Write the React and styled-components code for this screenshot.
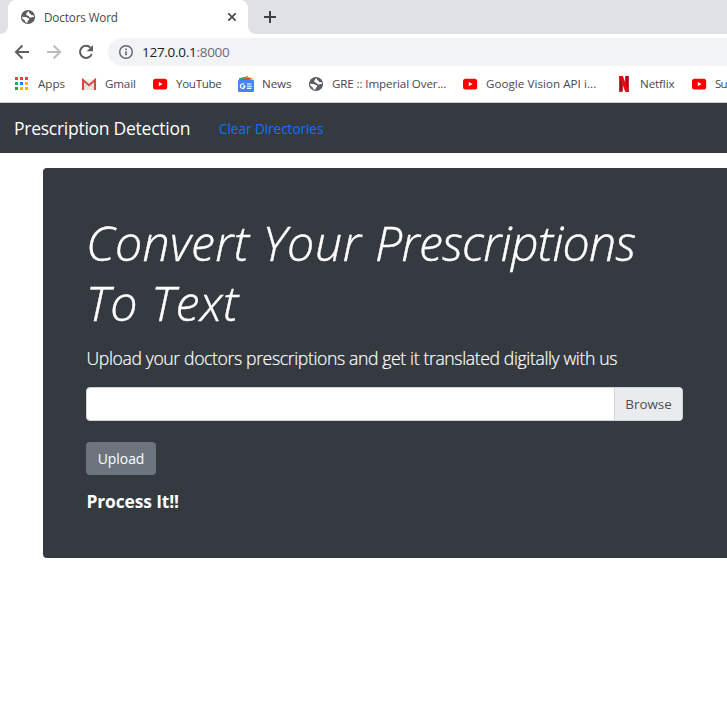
import React from "react";
import styled, { createGlobalStyle } from "styled-components";

const GlobalStyle = createGlobalStyle`
  * { box-sizing: border-box; }
  body {
    margin: 0;
    background: #fff;
    overflow: hidden;
    font-family: "Open Sans", "Noto Sans", sans-serif;
  }
`;

const Window = styled.div`
  width: 100%;
  height: 727px;
  overflow: hidden;
`;

const TabStrip = styled.div`
  display: flex;
  height: 34px;
  background: #dee1e6;
`;

const TabEdge = styled.div`
  width: 8px;
  background: #fff;
  &::before {
    content: "";
    display: block;
    height: 34px;
    background: #dee1e6;
    border-bottom-${(p) => p.$side}-radius: 8px;
  }
`;

const Tab = styled.div`
  display: flex;
  align-items: center;
  width: 240px;
  padding: 0 11px 0 12px;
  background: #fff;
  border-radius: 8px 8px 0 0;
  svg { flex: none; }
`;

const TabTitle = styled.span`
  flex: 1;
  margin-left: 8px;
  font-size: 11.7px;
  letter-spacing: -0.13px;
  line-height: 16px;
  color: #45494d;
`;

const NewTab = styled.div`
  display: flex;
  align-items: center;
  padding-left: 7px;
`;

const Toolbar = styled.div`
  display: flex;
  align-items: center;
  height: 36px;
  padding-left: 14px;
  background: #fff;
`;

const NavIcon = styled.div`
  display: flex;
  width: 32px;
`;

const AddressBar = styled.div`
  display: flex;
  align-items: center;
  flex: 1;
  height: 28px;
  margin-left: -2px;
  padding-left: 10px;
  background: #f1f3f4;
  border-radius: 14px 0 0 14px;
`;

const Url = styled.span`
  margin-left: 8px;
  font-size: 13.5px;
  letter-spacing: -0.28px;
  color: #202124;
`;

const Port = styled.span`
  color: #6a6e73;
`;

const Bookmarks = styled.div`
  display: grid;
  grid-template-columns: 67px 71px 86px 70px 154px 154px 75px 36px;
  align-items: center;
  height: 33px;
  padding: 0 0 4px 14px;
  background: #fff;
  border-bottom: 1px solid #cfcfd1;
`;

const Bookmark = styled.div`
  display: flex;
  align-items: center;
  gap: 8px;
  svg { flex: none; }
`;

const BookmarkLabel = styled.span`
  font-size: 11.6px;
  letter-spacing: ${(p) => p.$spacing || 0}px;
  line-height: 16px;
  color: #45494d;
  white-space: nowrap;
`;

const Navbar = styled.nav`
  display: flex;
  align-items: center;
  height: 50px;
  padding-left: 14px;
  background: #343a40;
`;

const Brand = styled.span`
  width: 205px;
  font-size: 17.5px;
  letter-spacing: -0.26px;
  color: #fff;
  white-space: nowrap;
`;

const NavLink = styled.a`
  padding-top: 1px;
  font-size: 13.6px;
  letter-spacing: -0.06px;
  color: #0a74ff;
  white-space: nowrap;
`;

const Jumbotron = styled.main`
  margin: 15px 0 0 43px;
  height: 390px;
  padding: 44px 44px 0 43px;
  background: #343a40;
  border-radius: 4px 0 0 4px;
  color: #fff;
`;

const Heading = styled.h1`
  margin: 0;
  font-size: 48.3px;
  font-weight: 300;
  font-style: italic;
  line-height: 60px;
  white-space: nowrap;
  -webkit-text-stroke: 0.4px #fff;
`;

const Word = styled.span`
  letter-spacing: ${(p) => p.$spacing}px;
`;

const Lead = styled.p`
  margin: 13px 0 0 0.5px;
  font-size: 17.6px;
  font-weight: 300;
  letter-spacing: -0.37px;
  line-height: 27px;
  white-space: nowrap;
  -webkit-text-stroke: 0.2px #fff;
`;

const FileField = styled.div`
  display: flex;
  height: 34px;
  margin-top: 15px;
  background: #fff;
  border: 1px solid #ced4da;
  border-radius: 4px;
  overflow: hidden;
`;

const FileName = styled.div`
  flex: 1;
`;

const Browse = styled.div`
  display: flex;
  align-items: center;
  justify-content: center;
  width: 68px;
  border-left: 1px solid #ced4da;
  background: #e9ecef;
  color: #495057;
  font-size: 13.4px;
`;

const UploadButton = styled.button`
  display: flex;
  align-items: center;
  justify-content: center;
  width: 70px;
  height: 33px;
  margin-top: 21px;
  padding: 0 0 1px;
  border: 0;
  border-radius: 4px;
  background: #6c757d;
  color: #fff;
  font: 13.9px "Open Sans", sans-serif;
`;

const Process = styled.p`
  margin: 13px 0 0 0.5px;
  font-size: 17.4px;
  font-weight: 700;
  letter-spacing: -0.12px;
  line-height: 27px;
`;

const Globe = () => (
  <svg width="16" height="16" viewBox="0 0 16 16">
    <circle cx="8" cy="8" r="7.1" fill="#5a5e63" />
    <path d="M9 2.3C6.9 3.4 6 4.3 6.3 5.6 6.6 6.8 8.2 6.3 8.8 7.2 9.3 8.2 10.6 8.9 11.7 8.3 12.5 7.9 13.2 8 13.7 8.3L14 7 13 6.1C11.8 6.6 10.8 6 11 5 9.5 5 8.7 4 9 2.3Z" fill="#fff" />
    <path d="M2.1 7.6C4 8.5 5.3 7.6 6.8 8.5 8 9.2 9.5 9.3 9.2 10.6 9 11.4 7.8 11.4 7.7 12.3L7.5 13.7C6.6 13.7 5.8 13.4 5 13 5.3 11.6 4.5 11.2 3.6 10.7 2.5 10.1 2 9.1 2.1 7.6Z" fill="#fff" />
  </svg>
);

const Close = () => (
  <svg width="10" height="10" viewBox="0 0 10 10" stroke="#45494d" strokeWidth="1.7">
    <path d="m1.3 1.3 7.4 7.4m0-7.4L1.3 8.7" />
  </svg>
);

const Plus = () => (
  <svg width="14" height="14" viewBox="0 0 14 14" stroke="#3c4043" strokeWidth="2">
    <path d="M7 1v12M1 7h12" />
  </svg>
);

const Arrow = ({ color, flip }) => (
  <svg width="16" height="16" viewBox="0 0 16 16" fill="none" stroke={color} strokeWidth="1.9">
    <path
      d="M15 8H2.3M8.4 1.5 1.9 8l6.5 6.5"
      transform={flip ? "translate(16 0) scale(-1 1)" : undefined}
    />
  </svg>
);

const Reload = () => (
  <svg width="16" height="16" viewBox="0 0 16 16">
    <path d="M12.5 3.6A6.1 6.1 0 1 0 13.8 10" fill="none" stroke="#5a5e63" strokeWidth="2" />
    <path d="M15 1v6.3H8.7Z" fill="#5a5e63" />
  </svg>
);

const Info = () => (
  <svg width="16" height="16" viewBox="0 0 16 16">
    <circle cx="8" cy="8" r="6.3" fill="none" stroke="#5f6368" strokeWidth="1.4" />
    <path d="M8 7.2v4M8 4.5v1.5" stroke="#5f6368" strokeWidth="1.6" />
  </svg>
);

const APP_COLORS = [
  "#ea4335", "#ea4335", "#ea4335",
  "#34a853", "#1a85ff", "#fbb205",
  "#259b55", "#fbb205", "#fbb205",
];

const AppsIcon = () => (
  <svg width="16" height="16" viewBox="0 0 16 16">
    {APP_COLORS.map((c, i) => (
      <rect key={i} x={1 + (i % 3) * 5} y={1 + Math.floor(i / 3) * 5} width="3" height="3" fill={c} />
    ))}
  </svg>
);

const GmailIcon = () => (
  <svg width="16" height="16" viewBox="0 0 16 16">
    <path d="M1 3h14v11H1Z" fill="#e6e6e6" />
    <path d="m3 12 4-4m6 4L9 8" stroke="#cfcfcf" strokeWidth=".7" />
    <path d="M2 3h12L8 8Z" fill="#f4f3f3" />
    <path d="M2 14V4l6 5.2L14 4v10" fill="none" stroke="#d54b3d" strokeWidth="2.1" />
  </svg>
);

const YoutubeIcon = () => (
  <svg width="16" height="16" viewBox="0 0 16 16">
    <rect x="1" y="2.8" width="14.2" height="10.6" rx="2.5" fill="#f00" />
    <path d="M6.8 5.9v4.4l3.7-2.2Z" fill="#fff" />
  </svg>
);

const NewsIcon = () => (
  <svg width="16" height="16" viewBox="0 0 16 16">
    <path d="M1 2.2 10 0l1 5H1Z" fill="#32a853" />
    <path d="m8 1 7 1.4-1 3H6Z" fill="#fbbc04" />
    <path d="m5 2.4 8-.9.6 3.5H6Z" fill="#ea4335" />
    <path d="m12.4 2.2 2.6.2-.6 3H12Z" fill="#fbbc04" />
    <rect y="4" width="16" height="12" rx="1" fill="#4285f4" />
    <path d="M6.3 8.4A2.3 2.3 0 1 0 7 10.1H4.8" fill="none" stroke="#fff" strokeWidth="1.2" />
    <path d="M9 8h4.4M9 10.2h5M9 12.4h4.4" stroke="#fff" strokeWidth="1.1" />
  </svg>
);

const NetflixIcon = () => (
  <svg width="16" height="16" viewBox="0 0 16 16">
    <path d="M3.2 0h3.6v15.6l-3.6.4ZM9.2 0h3.6v16l-3.6-.4Z" fill="#b1060f" />
    <path d="M3.2 0h3.6l6 16-3.6-.4Z" fill="#e50914" />
  </svg>
);

const BOOKMARKS = [
  { label: "Apps", Icon: AppsIcon },
  { label: "Gmail", Icon: GmailIcon, spacing: -0.15 },
  { label: "YouTube", Icon: YoutubeIcon, spacing: -0.3 },
  { label: "News", Icon: NewsIcon, spacing: -0.1 },
  { label: "GRE :: Imperial Over...", Icon: Globe, spacing: -0.12 },
  { label: "Google Vision API i...", Icon: YoutubeIcon, spacing: 0.05 },
  { label: "Netflix", Icon: NetflixIcon, spacing: -0.1 },
  { label: "Su", Icon: YoutubeIcon, spacing: -0.8 },
];

export default function App() {
  return (
    <Window>
      <GlobalStyle />
      <TabStrip>
        <TabEdge $side="right" />
        <Tab>
          <Globe />
          <TabTitle>Doctors Word</TabTitle>
          <Close />
        </Tab>
        <TabEdge $side="left" />
        <NewTab>
          <Plus />
        </NewTab>
      </TabStrip>
      <Toolbar>
        <NavIcon><Arrow color="#5a5e63" /></NavIcon>
        <NavIcon><Arrow color="#babcbe" flip /></NavIcon>
        <NavIcon><Reload /></NavIcon>
        <AddressBar>
          <Info />
          <Url>127.0.0.1<Port>:8000</Port></Url>
        </AddressBar>
      </Toolbar>
      <Bookmarks>
        {BOOKMARKS.map(({ label, Icon, spacing }) => (
          <Bookmark key={label}>
            <Icon />
            <BookmarkLabel $spacing={spacing}>{label}</BookmarkLabel>
          </Bookmark>
        ))}
      </Bookmarks>
      <Navbar>
        <Brand>Prescription Detection</Brand>
        <NavLink>Clear Directories</NavLink>
      </Navbar>
      <Jumbotron>
        <Heading>
          <Word $spacing={0.3}>Convert </Word>
          <Word $spacing={0.7}>Your </Word>
          <Word $spacing={-0.75}>Prescriptions</Word>
          <br />
          <Word $spacing={0.6}>To Text</Word>
        </Heading>
        <Lead>Upload your doctors prescriptions and get it translated digitally with us</Lead>
        <FileField>
          <FileName />
          <Browse>Browse</Browse>
        </FileField>
        <UploadButton>Upload</UploadButton>
        <Process>Process It!!</Process>
      </Jumbotron>
    </Window>
  );
}
